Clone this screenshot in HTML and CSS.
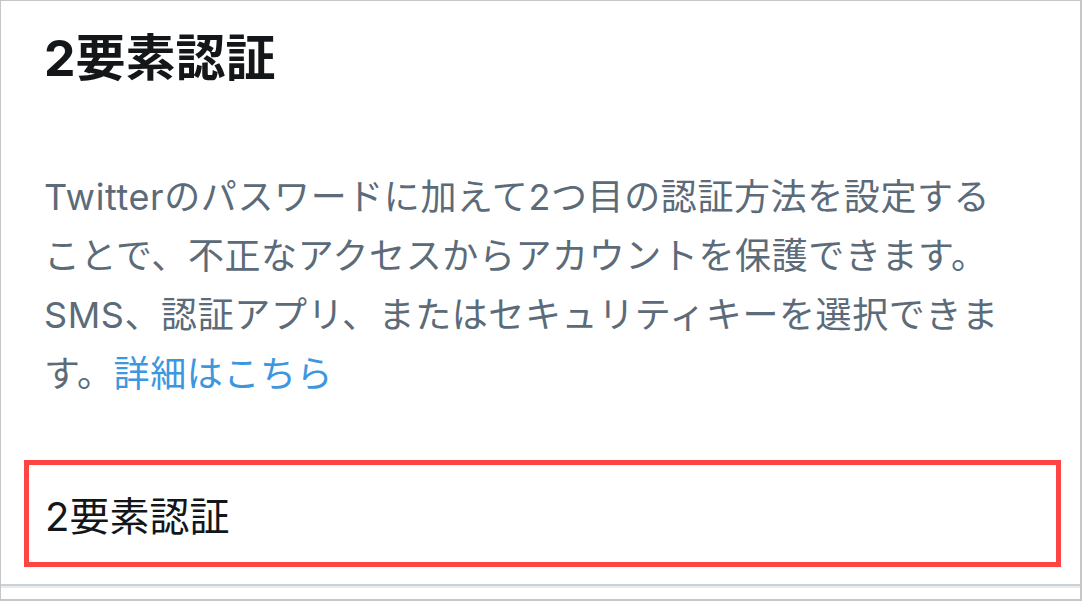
FILE: index.html
```html
<!DOCTYPE html>
<html lang="ja">
<head>
<meta charset="utf-8">
<link rel="stylesheet" href="styles.css">
</head>
<body>
<div class="frame">
  <section class="intro">
    <h1 class="title">2要素認証</h1>
    <p class="desc">Twitterのパスワードに加えて2つ目の認証方法を設定することで、不正なアクセスからアカウントを保護できます。SMS、認証アプリ、またはセキュリティキーを選択できます。<a class="link" href="#">詳細はこちら</a></p>
  </section>
  <div class="row-area">
    <div class="row">2要素認証</div>
  </div>
  <div class="sep"></div>
</div>
</body>
</html>
```

FILE: styles.css
```css
html, body {
  margin: 0;
  padding: 0;
  background: #ffffff;
}
.frame {
  box-sizing: border-box;
  width: 1082px;
  height: 601px;
  border-style: solid;
  border-color: #c6c6c6;
  border-width: 1px 2px 2px 1px;
  font-family: Inter, "Noto Sans CJK JP", sans-serif;
  display: flex;
  flex-direction: column;
  overflow: hidden;
}
.intro {
  flex-shrink: 0;
  padding: 0 64px 0 43px;
}
.title {
  margin: 22px 0 0 0;
  font-size: 50px;
  line-height: 70px;
  font-weight: 700;
  color: #14171a;
}
.desc {
  margin: 75px 0 0 0;
  font-size: 36px;
  line-height: 59px;
  letter-spacing: 0.6px;
  color: #5b6b79;
}
.link {
  color: #3d97de;
  text-decoration: none;
}
.row-area {
  flex-shrink: 0;
  padding: 0 19px 0 23px;
  margin-top: 56px;
}
.row {
  box-sizing: border-box;
  height: 107px;
  border: 5px solid #ff4444;
  padding-left: 16px;
  display: flex;
  align-items: center;
  font-size: 40px;
  color: #14171a;
}
.sep {
  flex-shrink: 0;
  margin-top: 17px;
  height: 2px;
  background: #ccd1d5;
  border-bottom: 2px solid #e6ecf0;
}
```
